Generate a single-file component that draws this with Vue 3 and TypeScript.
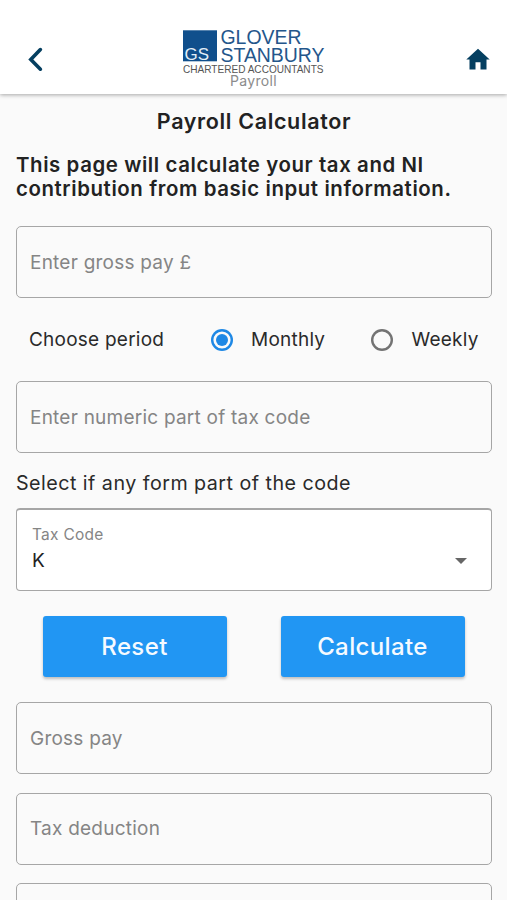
<script setup lang="ts">
import { ref } from 'vue'

type Period = 'Monthly' | 'Weekly'

const periods: Period[] = ['Monthly', 'Weekly']
const results: string[] = ['Gross pay', 'Tax deduction', 'NI deduction']

const grossPay = ref('')
const taxNumber = ref('')
const period = ref<Period>('Monthly')
const taxLetter = ref('K')

function reset(): void {
  grossPay.value = ''
  taxNumber.value = ''
  period.value = 'Monthly'
}
</script>

<template>
  <div class="screen">
    <header class="bar">
      <button class="icon-button" aria-label="Back">
        <svg class="back" width="16" height="26" viewBox="0 0 16 26">
          <path d="M13.400 3.600 3.800 13.400l9.600 9.800" fill="none" stroke="#053f60" stroke-width="3.600" stroke-linecap="round" />
        </svg>
      </button>
      <div class="brand">
        <svg class="logo" width="152" height="54" viewBox="-4 -4 152 54">
          <rect x="1" y="1.300" width="34" height="31" fill="#104f8c" />
          <text class="mark" x="2.500" y="30.500" textLength="24.500" lengthAdjust="spacingAndGlyphs">GS</text>
          <text class="name" x="38.500" y="15.200" textLength="81" lengthAdjust="spacingAndGlyphs">GLOVER</text>
          <text class="name" x="38.500" y="33" textLength="104" lengthAdjust="spacingAndGlyphs">STANBURY</text>
          <text class="trade" x="1" y="43.800" textLength="140.500" lengthAdjust="spacingAndGlyphs">CHARTERED ACCOUNTANTS</text>
        </svg>
        <span class="section">Payroll</span>
      </div>
      <button class="icon-button" aria-label="Home">
        <svg class="home" width="24" height="22" viewBox="0 0 24 22">
          <path d="M12 .8 .3 11.500h3.200v10h6v-7.200h5v7.200h6v-10h3.200z" fill="#053f60" />
        </svg>
      </button>
    </header>

    <main class="content">
      <h1 class="title">Payroll Calculator</h1>
      <p class="intro">This page will calculate your tax and NI<br />contribution from basic input information.</p>

      <input v-model="grossPay" class="field gross" placeholder="Enter gross pay £" />

      <div class="period">
        <span class="period-label">Choose period</span>
        <label v-for="option in periods" :key="option" class="option">
          <input v-model="period" class="radio" type="radio" name="period" :value="option" />
          <span>{{ option }}</span>
        </label>
      </div>

      <input v-model="taxNumber" class="field" placeholder="Enter numeric part of tax code" />

      <p class="hint">Select if any form part of the code</p>

      <button class="select">
        <span class="select-text">
          <span class="select-label">Tax Code</span>
          <span class="select-value">{{ taxLetter }}</span>
        </span>
        <svg class="caret" width="12" height="6" viewBox="0 0 12 6"><path d="M0 0h12L6 6z" fill="#666" /></svg>
      </button>

      <div class="actions">
        <button class="action" @click="reset">Reset</button>
        <button class="action calculate">Calculate</button>
      </div>

      <div class="results">
        <input v-for="label in results" :key="label" class="field" :placeholder="label" readonly />
      </div>
    </main>
  </div>
</template>

<style>
body {
  margin: 0;
  background: #fafafa;
}
</style>

<style scoped>
.screen {
  height: 100vh;
  overflow: hidden;
  background: #fafafa;
  color: #2a2a2a;
  font-family: Inter, sans-serif;
}

button,
input {
  font-family: inherit;
}

.bar {
  display: flex;
  justify-content: space-between;
  box-sizing: border-box;
  height: 94px;
  padding: 0 17px 0 23px;
  background: #fff;
  box-shadow: 0 1px 4px rgba(0, 0, 0, 0.34);
}

.icon-button {
  display: flex;
  width: 24px;
  padding: 0;
  border: 0;
  background: none;
}

.back {
  margin: 46px 0 0 4px;
}

.home {
  margin-top: 48px;
}

.brand {
  display: flex;
  flex-direction: column;
  align-items: center;
  padding-top: 25px;
  margin-right: 6px;
}

.logo {
  flex: none;
  font-family: "Liberation Sans", Arial, sans-serif;
}

.mark {
  fill: #e3eef7;
  font-size: 17px;
}

.name {
  fill: #24568b;
  font-size: 19.500px;
}

.trade {
  fill: #555;
  font-size: 10.500px;
}

.section {
  margin-top: -6px;
  color: #8b8b8b;
  font-size: 14px;
  line-height: 16px;
  letter-spacing: 0.300px;
}

.content {
  padding: 0 15px 0 16px;
}

.title {
  margin: 0;
  padding-top: 14px;
  color: #222;
  font-size: 21.500px;
  font-weight: 600;
  line-height: 26px;
  letter-spacing: 0.650px;
  text-align: center;
}

.intro {
  margin: 19px 0 0;
  color: #222;
  font-size: 20.400px;
  font-weight: 600;
  line-height: 24px;
  letter-spacing: 0.600px;
  white-space: nowrap;
}

.field {
  display: block;
  box-sizing: border-box;
  width: 100%;
  height: 72px;
  padding: 0 13px;
  border: 1px solid #a6a6a6;
  border-radius: 5px;
  outline: none;
  background: #fafafa;
  color: #222;
  font-size: 19px;
  letter-spacing: 0.230px;
}

.field::placeholder {
  color: #858585;
  opacity: 1;
}

.gross {
  margin-top: 25px;
}

.period {
  display: flex;
  align-items: center;
  height: 83px;
  padding: 0 13px;
  font-size: 19px;
  letter-spacing: 0.230px;
  white-space: nowrap;
}

.period-label {
  width: 181.500px;
}

.option {
  display: flex;
  align-items: center;
  gap: 18.500px;
  width: 160.500px;
}

.option:last-child {
  width: auto;
}

.radio {
  display: grid;
  flex: none;
  place-items: center;
  width: 22px;
  height: 22px;
  margin: 0;
  appearance: none;
  border-radius: 50%;
  box-shadow: inset 0 0 0 2.400px #737373;
}

.radio:checked {
  box-shadow: inset 0 0 0 2.400px #1e88e5;
}

.radio:checked::before {
  width: 12px;
  height: 12px;
  border-radius: 50%;
  background: #1e88e5;
  content: "";
}

.hint {
  margin: 0;
  padding: 18px 0 12px;
  font-size: 19.700px;
  line-height: 25px;
  letter-spacing: 0.470px;
}

.select {
  display: flex;
  align-items: center;
  justify-content: space-between;
  box-sizing: border-box;
  width: 100%;
  height: 83px;
  padding: 0 24px 0 15px;
  border: 1px solid #a6a6a6;
  border-top-width: 2px;
  border-radius: 4px;
  background: #fff;
  text-align: left;
}

.select-text {
  display: flex;
  flex-direction: column;
}

.select-label {
  color: #858585;
  font-size: 15.500px;
  line-height: 22px;
  letter-spacing: 0.250px;
}

.select-value {
  color: #222;
  font-size: 19px;
  line-height: 30px;
}

.caret {
  margin-top: 22px;
}

.actions {
  display: flex;
  justify-content: space-between;
  padding: 25px 27px;
}

.action {
  width: 184px;
  height: 61px;
  padding: 0 1px 0 0;
  border: 0;
  border-radius: 3px;
  background: #2196f3;
  box-shadow: 0 2px 3px rgba(0, 0, 0, 0.24);
  color: #f5faff;
  font-size: 24px;
  font-weight: 500;
  letter-spacing: 0.380px;
}

.results {
  display: grid;
  gap: 18.500px;
}
</style>
